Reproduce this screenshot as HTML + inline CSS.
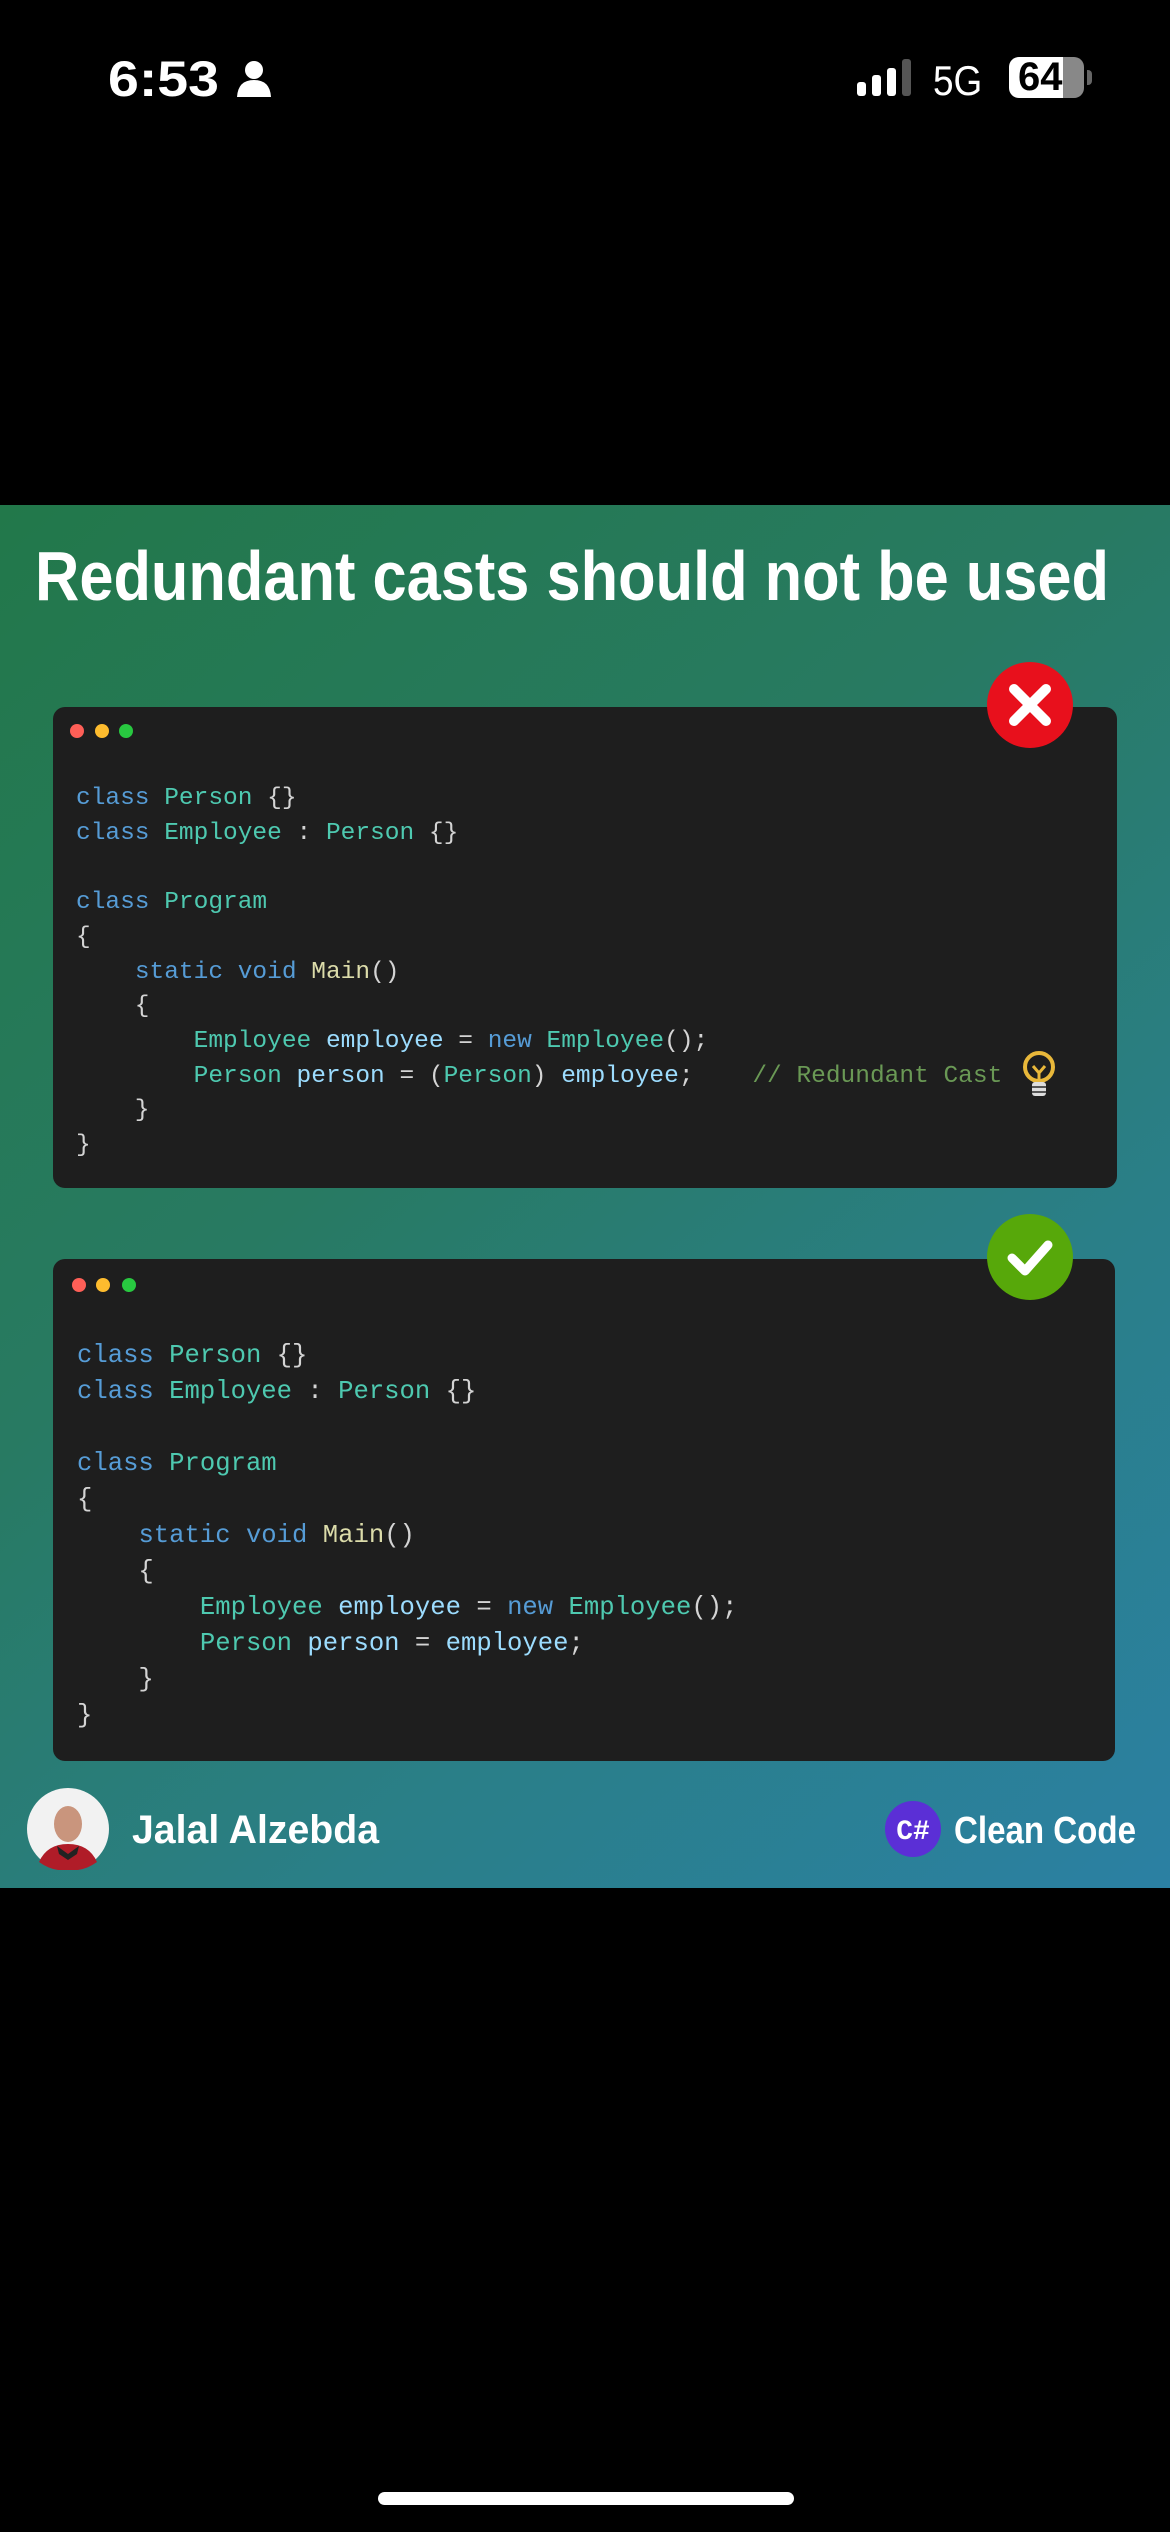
<!DOCTYPE html>
<html><head><meta charset="utf-8">
<style>
*{margin:0;padding:0;box-sizing:border-box}
body{width:1170px;height:2532px;background:#000;position:relative;overflow:hidden;font-family:"Liberation Sans",sans-serif}
.abs{position:absolute}
.bg{left:0;top:505px;width:1170px;height:1383px;background:linear-gradient(140deg,#22784a 0%,#287a62 40%,#2a7f88 70%,#2b80a3 100%)}
.card{position:absolute;background:#1e1e1e;border-radius:12px}
.dot{position:absolute;width:14px;height:14px;border-radius:50%}
pre{position:absolute;font-family:"Liberation Mono",monospace;color:#d4d4d4;white-space:pre}
.k{color:#569cd6}.t{color:#4ec9b0}.v{color:#9cdcfe}.f{color:#dcdcaa}.c{color:#6a9955}
</style></head><body>
<!-- status bar -->
<svg class="abs" style="left:106px;top:48px" width="120" height="56"><text x="2" y="48" font-family="Liberation Sans" font-weight="bold" font-size="50" fill="#fff" textLength="111" lengthAdjust="spacingAndGlyphs">6:53</text></svg>
<svg class="abs" style="left:236px;top:60px" width="36" height="38" viewBox="0 0 36 38"><circle cx="18" cy="10" r="9" fill="#fff"/><path d="M1 37 Q2 20 18 20 Q34 20 35 37 Z" fill="#fff"/></svg>
<svg class="abs" style="left:855px;top:58px" width="62" height="40"><rect x="2" y="24" width="9" height="14" rx="3" fill="#fff"/><rect x="17" y="17" width="9" height="21" rx="3" fill="#fff"/><rect x="32" y="10" width="9" height="28" rx="3" fill="#fff"/><rect x="47" y="1" width="9" height="37" rx="3" fill="#555"/></svg>
<div class="abs" style="left:933px;top:57px;font-size:42px;color:#fff;transform:scaleX(0.88);transform-origin:left">5G</div>
<div class="abs" style="left:1009px;top:57px;width:75px;height:41px;border-radius:10px;background:linear-gradient(90deg,#fff 0,#fff 72%,#888 72%);overflow:hidden"></div>
<div class="abs" style="left:1087px;top:70px;width:5px;height:15px;border-radius:0 4px 4px 0;background:#666"></div>
<div class="abs" style="left:1018px;top:55px;font-size:40px;font-weight:bold;color:#000">64</div>

<div class="abs bg"></div>
<svg class="abs" style="left:0;top:520px" width="1170" height="110"><text x="35" y="80" font-family="Liberation Sans" font-weight="bold" font-size="70" fill="#fff" textLength="1074" lengthAdjust="spacingAndGlyphs">Redundant casts should not be used</text></svg>

<!-- card 1 -->
<div class="card" style="left:53px;top:707px;width:1064px;height:481px"></div>
<div class="dot" style="left:70px;top:724px;background:#fe5f57"></div>
<div class="dot" style="left:95px;top:724px;background:#febc2e"></div>
<div class="dot" style="left:119px;top:724px;background:#28c840"></div>
<pre style="left:76px;top:782px;font-size:24.5px;line-height:34.7px"><span class="k">class</span> <span class="t">Person</span> {}
<span class="k">class</span> <span class="t">Employee</span> : <span class="t">Person</span> {}

<span class="k">class</span> <span class="t">Program</span>
{
    <span class="k">static</span> <span class="k">void</span> <span class="f">Main</span>()
    {
        <span class="t">Employee</span> <span class="v">employee</span> = <span class="k">new</span> <span class="t">Employee</span>();
        <span class="t">Person</span> <span class="v">person</span> = (<span class="t">Person</span>) <span class="v">employee</span>;    <span class="c">// Redundant Cast</span>
    }
}</pre>
<svg class="abs" style="left:1021px;top:1050px" width="36" height="52" viewBox="0 0 36 52"><circle cx="18" cy="17" r="14" fill="none" stroke="#e9b83a" stroke-width="4"/><path d="M12 16 L18 23 L24 16 M18 23 V30" stroke="#e9b83a" stroke-width="3" fill="none"/><rect x="11" y="32" width="14" height="14" rx="3" fill="#ddd"/><path d="M11 37 H25 M11 42 H25" stroke="#555" stroke-width="2"/></svg>
<svg class="abs" style="left:986px;top:661px" width="88" height="88"><circle cx="44" cy="44" r="43" fill="#e8101c"/><path d="M28 28 L60 60 M60 28 L28 60" stroke="#fff" stroke-width="10" stroke-linecap="round"/></svg>

<!-- card 2 -->
<div class="card" style="left:53px;top:1259px;width:1062px;height:502px"></div>
<div class="dot" style="left:72px;top:1278px;background:#fe5f57"></div>
<div class="dot" style="left:96px;top:1278px;background:#febc2e"></div>
<div class="dot" style="left:122px;top:1278px;background:#28c840"></div>
<pre style="left:77px;top:1338px;font-size:25.6px;line-height:36px"><span class="k">class</span> <span class="t">Person</span> {}
<span class="k">class</span> <span class="t">Employee</span> : <span class="t">Person</span> {}

<span class="k">class</span> <span class="t">Program</span>
{
    <span class="k">static</span> <span class="k">void</span> <span class="f">Main</span>()
    {
        <span class="t">Employee</span> <span class="v">employee</span> = <span class="k">new</span> <span class="t">Employee</span>();
        <span class="t">Person</span> <span class="v">person</span> = <span class="v">employee</span>;
    }
}</pre>
<svg class="abs" style="left:986px;top:1213px" width="88" height="88"><circle cx="44" cy="44" r="43" fill="#57a80a"/><path d="M26 45 L39 58 L62 32" stroke="#fff" stroke-width="9" fill="none" stroke-linecap="round" stroke-linejoin="round"/></svg>

<!-- footer -->
<svg class="abs" style="left:27px;top:1788px" width="82" height="82"><circle cx="41" cy="41" r="41" fill="#f2f2f2"/><ellipse cx="41" cy="36" rx="14" ry="18" fill="#c9957d"/><path d="M12 74 Q20 56 41 56 Q62 56 70 74 Q56 84 41 82 Q26 84 12 74Z" fill="#b01c28"/><path d="M30 58 L41 66 L52 58 L50 66 L41 72 L32 66Z" fill="#222"/></svg>
<svg class="abs" style="left:130px;top:1805px" width="260" height="50"><text x="2" y="38" font-family="Liberation Sans" font-weight="bold" font-size="40" fill="#fff" textLength="247" lengthAdjust="spacingAndGlyphs">Jalal Alzebda</text></svg>
<svg class="abs" style="left:885px;top:1801px" width="56" height="56"><circle cx="28" cy="28" r="28" fill="#5b2fd6"/><text x="28" y="38" text-anchor="middle" font-family="Liberation Mono" font-weight="bold" font-size="28" fill="#fff">C#</text></svg>
<svg class="abs" style="left:952px;top:1805px" width="190" height="50"><text x="2" y="38" font-family="Liberation Sans" font-weight="bold" font-size="38" fill="#fff" textLength="182" lengthAdjust="spacingAndGlyphs">Clean Code</text></svg>

<div class="abs" style="left:378px;top:2492px;width:416px;height:13px;border-radius:7px;background:#fff"></div>
</body></html>
